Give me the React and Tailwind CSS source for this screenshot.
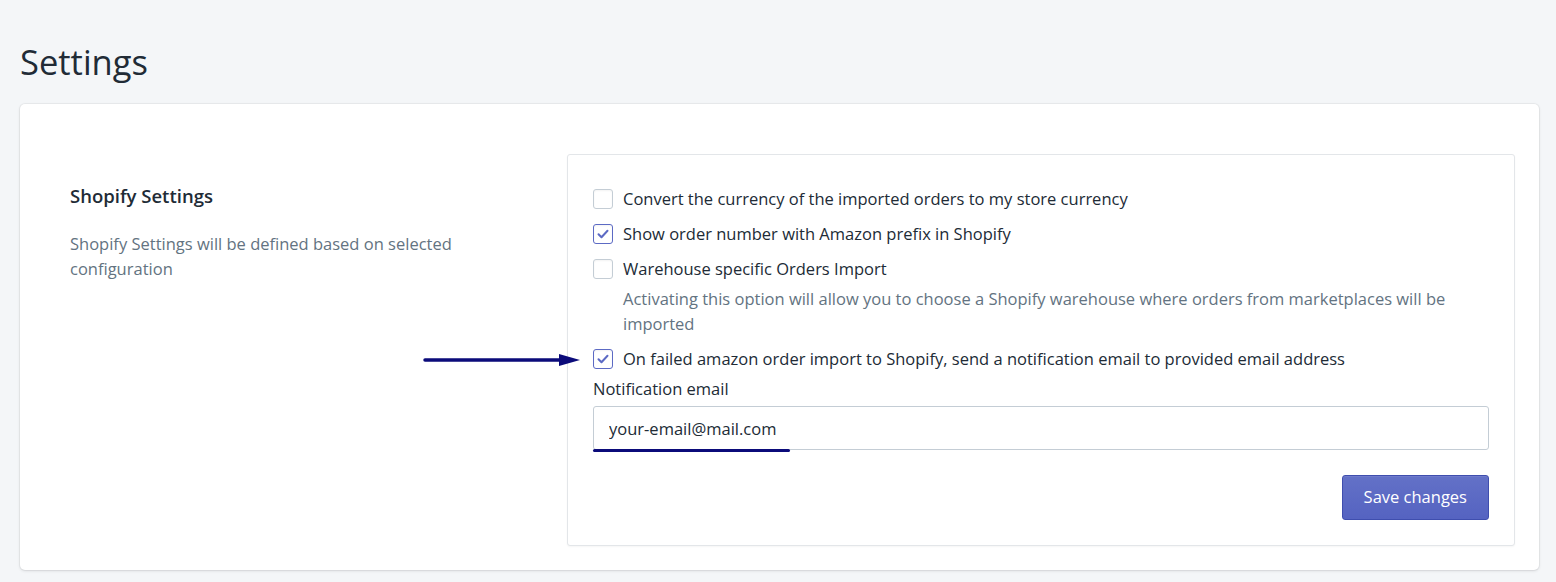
export default function App() {
  const Check = ({ checked }) => (
    <span
      className={`mt-[3px] flex h-5 w-5 shrink-0 items-center justify-center rounded-[3px] border bg-white ${
        checked ? "border-[#5c6ac4]" : "border-[#c4cdd5]"
      } shadow-[inset_0_1px_2px_rgba(0,0,0,0.05)]`}
    >
      {checked && (
        <svg width="12" height="10" viewBox="0 0 12 10" fill="none">
          <path d="M1.5 5.2 4.5 8.2 10.5 1.8" stroke="#5c6ac4" strokeWidth="2" strokeLinecap="round" strokeLinejoin="round" />
        </svg>
      )}
    </span>
  );

  return (
    <div className="min-h-[582px] bg-[#f4f6f8] pt-[38px] pr-[17px] pl-5 font-['Open_Sans',sans-serif] text-[16.5px] text-[#212b36]">
      <h1 className="text-[34.5px] leading-[48px] font-normal">Settings</h1>

      <div className="mt-[18px] flex rounded-[5px] bg-white pt-[50px] pr-6 pb-6 pl-[50px] shadow-[0_0_0_1px_rgba(63,63,68,0.05),0_1px_3px_0_rgba(63,63,68,0.15)]">
        <div className="w-[497px] shrink-0 pt-[30px]">
          <h2 className="text-[18.5px] leading-6 font-semibold">Shopify Settings</h2>
          <p className="mt-[23px] w-[410px] leading-[25px] text-[#637381]">
            Shopify Settings will be defined based on selected configuration
          </p>
        </div>

        <div className="relative flex-1 rounded-[3px] border border-[#e3e6e9] bg-white px-[25px] pt-[26px] pb-[25px] shadow-[0_1px_2px_rgba(0,0,0,0.04)]">
          <div className="flex gap-[10px] py-[5px] leading-[25px]">
            <Check />
            <span>Convert the currency of the imported orders to my store currency</span>
          </div>
          <div className="flex gap-[10px] py-[5px] leading-[25px]">
            <Check checked />
            <span>Show order number with Amazon prefix in Shopify</span>
          </div>
          <div className="flex gap-[10px] pt-[5px] leading-[25px]">
            <Check />
            <span>Warehouse specific Orders Import</span>
          </div>
          <p className="pt-[5px] pb-[5px] pl-[30px] leading-[25px] text-[#637381]">
            Activating this option will allow you to choose a Shopify warehouse where orders from marketplaces will be imported
          </p>
          <div className="relative flex gap-[10px] py-[5px] leading-[25px]">
            <Check checked />
            <span>On failed amazon order import to Shopify, send a notification email to provided email address</span>
            <svg className="absolute top-[11px] left-[-170px]" width="158" height="16" viewBox="0 0 158 16">
              <line x1="2" y1="8" x2="140" y2="8" stroke="#0b0b7a" strokeWidth="3.5" strokeLinecap="round" />
              <path d="M136 2 157 8 136 14Z" fill="#0b0b7a" />
            </svg>
          </div>

          <label className="mt-[3px] block leading-[20px]">Notification email</label>
          <div className="relative mt-[7px]">
            <input
              readOnly
              value="your-email@mail.com"
              className="h-[44px] w-full rounded-[3px] border border-[#c4cdd5] bg-white px-[15px] text-[16.5px] text-[#212b36] outline-none"
            />
            <span className="absolute bottom-[-2px] left-0 h-[3px] w-[197px] rounded-full bg-[#0b0b7a]" />
          </div>

          <div className="mt-[25px] flex justify-end">
            <button className="h-[45px] rounded-[3px] border border-[#3f4eae] bg-gradient-to-b from-[#6371c7] to-[#5563c1] px-[21px] text-white shadow-[inset_0_1px_0_0_#6f7bcb]">
              Save changes
            </button>
          </div>
        </div>
      </div>
    </div>
  );
}
